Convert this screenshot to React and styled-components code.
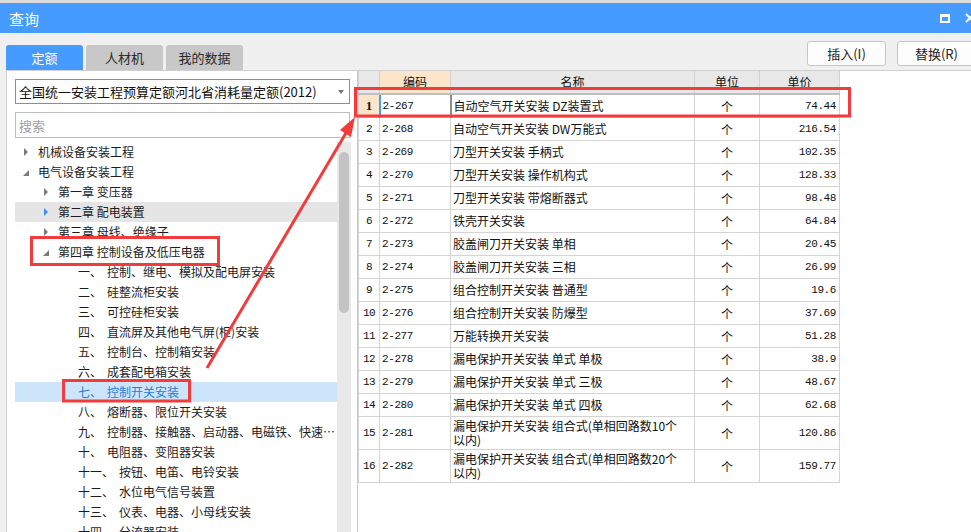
import React from 'react';
import styled, { createGlobalStyle } from 'styled-components';

const treeItems = [
    { level: 0, toggle: 'closed', label: '机械设备安装工程' },
    { level: 0, toggle: 'open', label: '电气设备安装工程' },
    { level: 1, toggle: 'closed', label: '第一章 变压器' },
    { level: 1, toggle: 'closed', label: '第二章 配电装置', state: 'hover' },
    { level: 1, toggle: 'closed', label: '第三章 母线、绝缘子' },
    { level: 1, toggle: 'open', label: '第四章 控制设备及低压电器' },
    { level: 2, num: '一、', label: '控制、继电、模拟及配电屏安装' },
    { level: 2, num: '二、', label: '硅整流柜安装' },
    { level: 2, num: '三、', label: '可控硅柜安装' },
    { level: 2, num: '四、', label: '直流屏及其他电气屏(柜)安装' },
    { level: 2, num: '五、', label: '控制台、控制箱安装' },
    { level: 2, num: '六、', label: '成套配电箱安装' },
    { level: 2, num: '七、', label: '控制开关安装', state: 'selected' },
    { level: 2, num: '八、', label: '熔断器、限位开关安装' },
    { level: 2, num: '九、', label: '控制器、接触器、启动器、电磁铁、快速自动开关安装' },
    { level: 2, num: '十、', label: '电阻器、变阻器安装' },
    { level: 2, num: '十一、', label: '按钮、电笛、电铃安装' },
    { level: 2, num: '十二、', label: '水位电气信号装置' },
    { level: 2, num: '十三、', label: '仪表、电器、小母线安装' },
    { level: 2, num: '十四、', label: '分流器安装' },
];

const rows = [
    ['2-267', '自动空气开关安装 DZ装置式', '74.44'],
    ['2-268', '自动空气开关安装 DW万能式', '216.54'],
    ['2-269', '刀型开关安装 手柄式', '102.35'],
    ['2-270', '刀型开关安装 操作机构式', '128.33'],
    ['2-271', '刀型开关安装 带熔断器式', '98.48'],
    ['2-272', '铁壳开关安装', '64.84'],
    ['2-273', '胶盖闸刀开关安装 单相', '20.45'],
    ['2-274', '胶盖闸刀开关安装 三相', '26.99'],
    ['2-275', '组合控制开关安装 普通型', '19.6'],
    ['2-276', '组合控制开关安装 防爆型', '37.69'],
    ['2-277', '万能转换开关安装', '51.28'],
    ['2-278', '漏电保护开关安装 单式 单极', '38.9'],
    ['2-279', '漏电保护开关安装 单式 三极', '48.67'],
    ['2-280', '漏电保护开关安装 单式 四极', '62.68'],
    ['2-281', '漏电保护开关安装 组合式(单相回路数10个\n以内)', '120.86'],
    ['2-282', '漏电保护开关安装 组合式(单相回路数20个\n以内)', '159.77'],
];

const App = () => {
    return (
        <Window>
            <GlobalStyle />
            <TitleBar>
                <Title>查询</Title>
                <TitleIcons>
                    <MaxIcon />
                    <svg width="10" height="10" viewBox="0 0 10 10">
                        <path d="M1 1L9 9M9 1L1 9" stroke="#fff" strokeWidth="2" />
                    </svg>
                </TitleIcons>
            </TitleBar>
            <Body>
                <LeftColumn>
                    <Tabs>
                        <Tab active>定额</Tab>
                        <Tab>人材机</Tab>
                        <Tab>我的数据</Tab>
                    </Tabs>
                    <LeftPanel>
                        <Select>
                            <span>全国统一安装工程预算定额河北省消耗量定额(2012)</span>
                            <Caret />
                        </Select>
                        <Search placeholder="搜索" />
                        <TreeBox>
                            <TreeList>
                                {treeItems.map((item, i) => (
                                    <TreeRow key={i} level={item.level} state={item.state}>
                                        <ToggleSlot>
                                            {item.toggle && (
                                                <Toggle open={item.toggle === 'open'} blue={item.state === 'hover'} />
                                            )}
                                        </ToggleSlot>
                                        <TreeLabel>
                                            {item.num && <Num>{item.num}</Num>}
                                            {item.label}
                                        </TreeLabel>
                                    </TreeRow>
                                ))}
                            </TreeList>
                            <ScrollTrack>
                                <ScrollThumb />
                            </ScrollTrack>
                        </TreeBox>
                    </LeftPanel>
                </LeftColumn>
                <RightColumn>
                    <Toolbar>
                        <Button>插入(I)</Button>
                        <Button>替换(R)</Button>
                    </Toolbar>
                    <TableArea>
                        <Grid>
                            <colgroup>
                                <col style={{ width: 21 }} />
                                <col style={{ width: 71 }} />
                                <col style={{ width: 244 }} />
                                <col style={{ width: 65 }} />
                                <col style={{ width: 80 }} />
                            </colgroup>
                            <thead>
                                <tr>
                                    <Th />
                                    <Th active>编码</Th>
                                    <Th>名称</Th>
                                    <Th>单位</Th>
                                    <Th>单价</Th>
                                </tr>
                            </thead>
                            <tbody>
                                {rows.map(([code, name, price], i) => (
                                    <tr key={code}>
                                        <IndexCell current={i === 0} tall={name.includes('\n')}>{i + 1}</IndexCell>
                                        <CodeCell current={i === 0}>{code}</CodeCell>
                                        <NameCell>{name}</NameCell>
                                        <UnitCell>个</UnitCell>
                                        <PriceCell>{price}</PriceCell>
                                    </tr>
                                ))}
                            </tbody>
                        </Grid>
                    </TableArea>
                </RightColumn>
            </Body>
            <Annotations width="971" height="532" viewBox="0 0 971 532">
                <g fill="none" stroke="#f23b3b" strokeWidth="3">
                    <rect x="355.5" y="88.5" width="494" height="27.5" />
                    <rect x="31.5" y="237.5" width="187" height="27" />
                    <rect x="63.5" y="380.5" width="126" height="20.5" />
                    <line x1="207" y1="368" x2="346" y2="133" />
                </g>
                <polygon points="355,117 351,137 340,130" fill="#f23b3b" />
            </Annotations>
        </Window>
    );
};

const GlobalStyle = createGlobalStyle`
    html, body {
        margin: 0;
        padding: 0;
        overflow: hidden;
        background: #f0f0f0;
    }
    body {
        font-family: "Noto Sans CJK SC", "Noto Sans", sans-serif;
    }
`;

const Window = styled.div`
    position: relative;
    width: 980px;
    height: 532px;
    display: flex;
    flex-direction: column;
    background: #f0f0f0;
    overflow: hidden;
`;

const TitleBar = styled.div`
    height: 30px;
    border-top: 3px solid #dcdcdc;
    background: #459bff;
    display: flex;
    align-items: center;
    justify-content: space-between;
    padding: 0 5px 0 9px;
`;

const Title = styled.div`
    color: #fff;
    font-size: 15px;
`;

const TitleIcons = styled.div`
    display: flex;
    align-items: center;
    gap: 15px;
`;

const MaxIcon = styled.div`
    width: 6px;
    height: 4px;
    border: 2px solid #fff;
    border-top-width: 3px;
`;

const Body = styled.div`
    flex: 1;
    min-height: 0;
    display: flex;
    padding-left: 6px;
`;

const LeftColumn = styled.div`
    width: 351px;
    display: flex;
    flex-direction: column;
`;

const Tabs = styled.div`
    height: 37px;
    display: flex;
    align-items: flex-end;
    gap: 3px;
`;

const Tab = styled.div`
    width: 77px;
    height: 25px;
    border-radius: 3px 3px 0 0;
    background: ${p => (p.active ? '#459bff' : '#c8c8c8')};
    color: ${p => (p.active ? '#fff' : '#2a2a2a')};
    font-size: 13px;
    display: flex;
    align-items: center;
    justify-content: center;
`;

const LeftPanel = styled.div`
    flex: 1;
    min-height: 0;
    background: #fff;
    border: 1px solid #d0d0d0;
    border-right: none;
    border-bottom: none;
    padding: 8px 0 0 8px;
    display: flex;
    flex-direction: column;
`;

const Select = styled.div`
    width: 335px;
    height: 25px;
    box-sizing: border-box;
    border: 1px solid #459bff;
    display: flex;
    align-items: center;
    justify-content: space-between;
    padding: 0 5px 0 3px;
    font-size: 13px;
    color: #111;
`;

const Caret = styled.span`
    width: 0;
    height: 0;
    border-top: 4px solid #777;
    border-left: 3.5px solid transparent;
    border-right: 3.5px solid transparent;
`;

const Search = styled.input`
    margin-top: 8px;
    width: 335px;
    height: 26px;
    box-sizing: border-box;
    border: 1px solid #bdbdbd;
    padding: 0 3px;
    font-family: "Noto Sans CJK SC", sans-serif;
    font-size: 13px;
    outline: none;
    &::placeholder {
        color: #a0a0a0;
    }
`;

const TreeBox = styled.div`
    margin-top: 4px;
    flex: 1;
    min-height: 0;
    display: flex;
    width: 336px;
`;

const TreeList = styled.div`
    width: 322px;
    overflow: hidden;
`;

const TreeRow = styled.div`
    height: 20px;
    display: flex;
    align-items: center;
    padding-left: ${p => 8 + p.level * 20}px;
    font-size: 12px;
    line-height: 18px;
    color: ${p => (p.state === 'selected' ? '#2b7cd9' : '#1c1c1c')};
    background: ${p =>
        p.state === 'selected' ? '#cce5fb' : p.state === 'hover' ? '#e5e5e5' : 'transparent'};
`;

const ToggleSlot = styled.span`
    width: 15px;
    flex: none;
    display: flex;
    align-items: center;
`;

const Toggle = styled.span`
    width: 0;
    height: 0;
    ${p =>
        p.open
            ? `border-bottom: 6px solid #7a7a7a; border-left: 6px solid transparent; margin-top: 1px;`
            : `border-left: 4px solid ${p.blue ? '#3d8ef0' : '#7a7a7a'};
               border-top: 4px solid transparent;
               border-bottom: 4px solid transparent;
               margin-left: 1px;`}
`;

const TreeLabel = styled.span`
    flex: 1;
    min-width: 0;
    white-space: nowrap;
    overflow: hidden;
    text-overflow: ellipsis;
    padding-bottom: 1px;
`;

const Num = styled.span`
    margin-right: 5px;
`;

const ScrollTrack = styled.div`
    width: 14px;
    background: #e8e8e8;
    padding-top: 10px;
    box-sizing: border-box;
`;

const ScrollThumb = styled.div`
    margin: 0 auto;
    width: 10px;
    height: 161px;
    border-radius: 5px;
    background: #c3c3c3;
`;

const RightColumn = styled.div`
    flex: 1;
    display: flex;
    flex-direction: column;
`;

const Toolbar = styled.div`
    height: 37px;
    box-sizing: border-box;
    display: flex;
    justify-content: flex-end;
    align-items: flex-start;
    gap: 11px;
    padding: 8px 4px 0 0;
`;

const Button = styled.div`
    width: 79px;
    height: 25px;
    box-sizing: border-box;
    background: #fdfdfd;
    border: 1px solid #c6c6c6;
    border-radius: 3px;
    font-size: 13px;
    color: #222;
    display: flex;
    align-items: center;
    justify-content: center;
`;

const TableArea = styled.div`
    flex: 1;
    background: #fff;
    border-top: 1px solid #d0d0d0;
    border-left: 1px solid #c8c8c8;
`;

const Grid = styled.table`
    border-collapse: collapse;
    table-layout: fixed;
    width: 481px;
    font-size: 12px;
    color: #111;
`;

const Th = styled.th`
    height: 22px;
    padding: 0;
    font-weight: normal;
    font-size: 12px;
    background: ${p => (p.active ? '#fde5c9' : '#e8e8e8')};
    border: 1px solid #d2d2d2;
    border-top: none;
    border-bottom: 2px solid #bebebe;
    line-height: 14px;
    vertical-align: middle;
`;

const Cell = styled.td`
    border: 1px solid #d4d4d4;
    padding: 0 2px;
    height: 22px;
    overflow: hidden;
    white-space: nowrap;
`;

const IndexCell = styled(Cell)`
    text-align: center;
    padding: 0;
    height: ${p => (p.tall ? 32 : 22)}px;
    background: ${p => (p.current ? '#fde5c9' : '#fff')};
    font-family: ${p => (p.current ? '"Liberation Serif", serif' : '"Liberation Mono", monospace')};
    font-weight: ${p => (p.current ? 'bold' : 'normal')};
    font-size: ${p => (p.current ? '13px' : '11px')};
    letter-spacing: -0.5px;
`;

const CodeCell = styled(Cell)`
    font-family: "Liberation Mono", monospace;
    font-size: 11px;
    letter-spacing: -0.4px;
    ${p => p.current && `border-left: 2px solid #459bff; border-right: 2px solid #8c8c8c;`}
`;

const NameCell = styled(Cell)`
    white-space: pre-line;
    line-height: 14px;
`;

const UnitCell = styled(Cell)`
    text-align: center;
`;

const PriceCell = styled(Cell)`
    text-align: right;
    padding-right: 3px;
    font-family: "Liberation Mono", monospace;
    font-size: 11px;
    letter-spacing: -0.4px;
`;

const Annotations = styled.svg`
    position: absolute;
    top: 0;
    left: 0;
    pointer-events: none;
`;

export default App;
